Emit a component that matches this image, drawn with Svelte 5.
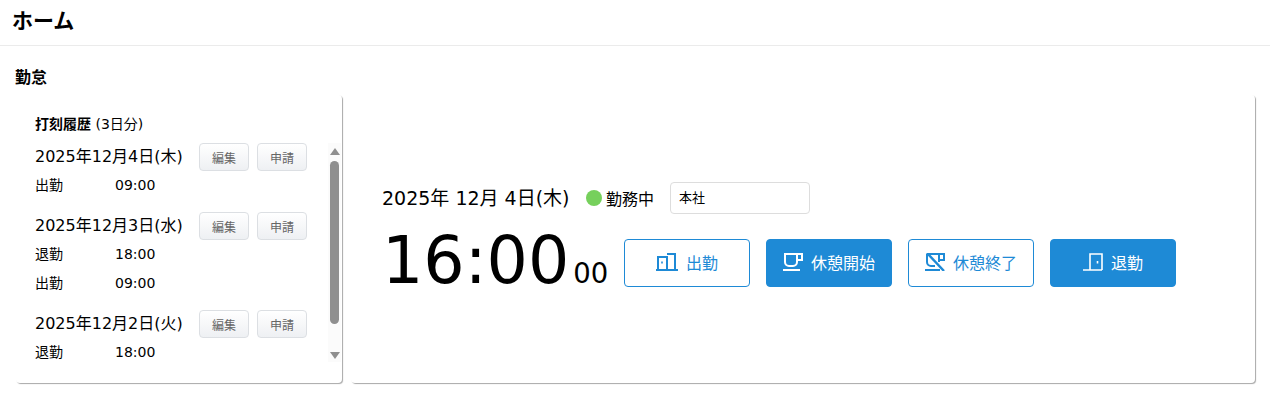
<script>
  const days = [
    { d: '2025年12月4日(木)', rows: [['出勤', '09:00']] },
    { d: '2025年12月3日(水)', rows: [['退勤', '18:00'], ['出勤', '09:00']] },
    { d: '2025年12月2日(火)', rows: [['退勤', '18:00']] }
  ];
</script>

<div class="page">
  <header><h1>ホーム</h1></header>
  <h2>勤怠</h2>
  <div class="cards">
    <section class="card history">
      <div class="list">
        <div class="cap"><b>打刻履歴</b> (3日分)</div>
        {#each days as day}
          <div class="day">
            <div class="dayhead">
              <span class="date">{day.d}</span>
              <button class="mini">編集</button>
              <button class="mini">申請</button>
            </div>
            {#each day.rows as r}
              <div class="row"><span class="kind">{r[0]}</span><span>{r[1]}</span></div>
            {/each}
          </div>
        {/each}
      </div>
      <div class="scroll">
        <svg class="arrow" width="10" height="7" viewBox="0 0 10 7"><path d="M5 0 L10 7 H0 Z" fill="#8f8f8f"/></svg>
        <div class="thumb"></div>
        <svg class="arrow down" width="10" height="7" viewBox="0 0 10 7"><path d="M0 0 H10 L5 7 Z" fill="#8f8f8f"/></svg>
      </div>
    </section>
    <section class="card clock">
      <div class="inner">
        <div class="top">
          <span class="today">2025年 12月 4日(木)</span>
          <span class="status"><i class="dot"></i>勤務中</span>
          <input class="place" value="本社" />
        </div>
        <div class="bottom">
          <div class="time"><span class="hm">16:00</span><span class="sec">00</span></div>
          <button class="act">
            <svg width="22" height="18" viewBox="0 0 22 18" fill="none" stroke="currentColor" stroke-width="2"><path d="M0 17 H22 M2 17 V4 H11 V17 M11 1 H19 V17" /><path d="M6 8.5v2" stroke-width="1.6"/></svg>
            出勤
          </button>
          <button class="act solid">
            <svg width="20" height="18" viewBox="0 0 20 18" fill="none" stroke="currentColor" stroke-width="2"><path d="M0 17 H17 M2 1 H14 V9 a4 4 0 0 1 -4 4 H6 a4 4 0 0 1 -4 -4 Z M14 1 H19 V7 H14"/></svg>
            休憩開始
          </button>
          <button class="act">
            <svg width="20" height="18" viewBox="0 0 20 18" fill="none" stroke="currentColor" stroke-width="2"><path d="M0 17 H15 M2 1 H14 V9 M2 1 V9 a4 4 0 0 0 4 4 H10 M14 1 H19 V7 H14"/><path d="M2 0 L19 18" stroke-width="2.4"/></svg>
            休憩終了
          </button>
          <button class="act solid">
            <svg width="20" height="18" viewBox="0 0 20 18" fill="none" stroke="currentColor" stroke-width="1.6"><path d="M0 17 H19 M7 17 V1 H19 V17"/><path d="M14.5 8v2.5" stroke-width="1.6"/></svg>
            退勤
          </button>
        </div>
      </div>
    </section>
  </div>
</div>

<style>
  :global(body) {
    margin: 0;
    background: #fff;
    color: #000;
    font-family: "DejaVu Sans", "Noto Sans CJK JP", sans-serif;
  }
  .page { width: 1270px; height: 411px; overflow: hidden; }
  header {
    height: 45px;
    border-bottom: 1px solid #ebebeb;
    display: flex;
    align-items: center;
    padding-left: 12px;
  }
  h1 { margin: 0 0 7px; font-size: 21px; font-weight: 700; line-height: 1; font-family: "Noto Sans CJK JP", sans-serif; }
  h2 { margin: 20px 0 0 15px; font-size: 16px; font-weight: 700; line-height: 20px; font-family: "Noto Sans CJK JP", sans-serif; }
  .cards { display: flex; gap: 9px; margin: 9px 15px 0 16px; height: 288px; }
  .card {
    background: #fff;
    border-radius: 4px;
    box-shadow: 1px 1px 1px #a8a8a8;
    box-sizing: border-box;
  }
  .history { width: 326px; display: flex; padding: 18px 1px 0 19px; }
  .list { width: 292px; height: 252px; overflow: hidden; }
  .cap { font-size: 14px; line-height: 20px; white-space: nowrap; }
  .cap b { font-weight: 700; font-family: "Noto Sans CJK JP", sans-serif; }
  .day { margin-bottom: 12px; }
  .dayhead { display: flex; align-items: center; height: 28px; margin-top: 9px; }
  .date { font-size: 16px; width: 164px; white-space: nowrap; position: relative; top: -2px; }
  .mini {
    width: 50px;
    height: 28px;
    margin-right: 8px;
    padding: 0;
    border: 1px solid #dcdfe3;
    border-radius: 4px;
    background: linear-gradient(#fff, #eef0f3);
    color: #666;
    font: 12px "Noto Sans CJK JP", sans-serif;
  }
  .row { display: flex; font-size: 14px; height: 29px; line-height: 29px; }
  .kind { width: 80px; }
  .scroll {
    width: 13px;
    margin-left: 2px;
    height: 219px;
    margin-top: 30px;
    display: flex;
    flex-direction: column;
    align-items: center;
    background: #fbfbfb;
  }
  .arrow { flex: none; margin-top: 5px; }
  .arrow.down { margin-top: 28px; }
  .thumb { flex: none; width: 9px; height: 163px; margin-top: 6px; background: #8f8f8f; border-radius: 5px; }
  .clock { flex: 1; display: flex; align-items: center; padding-left: 31px; }
  .inner { display: flex; flex-direction: column; margin-bottom: 8px; }
  .top { display: flex; align-items: center; height: 32px; }
  .today { font-size: 19px; width: 204px; white-space: nowrap; margin-bottom: 2px; }
  .status { display: flex; align-items: center; font-size: 16px; width: 84px; }
  .dot { width: 16px; height: 16px; border-radius: 50%; background: #76d05c; margin-right: 4px; }
  .place {
    width: 140px;
    height: 32px;
    box-sizing: border-box;
    border: 1px solid #ddd;
    border-radius: 4px;
    padding: 0 8px 2px;
    font: 13px "Noto Sans CJK JP", sans-serif;
    color: #000;
    outline: none;
  }
  .bottom { display: flex; align-items: center; margin-top: 23px; gap: 16px; }
  .time { width: 226px; display: flex; align-items: baseline; white-space: nowrap; }
  .hm { font-size: 65px; line-height: 48px; }
  .sec { font-size: 27.5px; margin-left: 4px; }
  .act {
    width: 126px;
    height: 48px;
    box-sizing: border-box;
    border: 1px solid #1e8ad6;
    border-radius: 4px;
    background: #fff;
    color: #1e8ad6;
    display: flex;
    align-items: center;
    justify-content: center;
    gap: 8px;
    padding: 0 0 2px;
    font: 16px "Noto Sans CJK JP", sans-serif;
  }
  .act.solid { background: #1e8ad6; color: #fff; }
</style>
